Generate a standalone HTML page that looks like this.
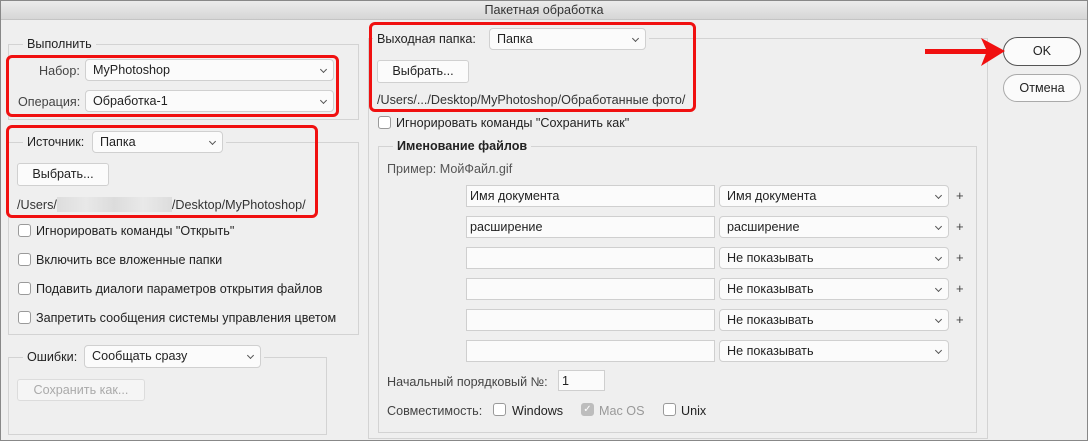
<!DOCTYPE html>
<html><head><meta charset="utf-8"><style>
*{box-sizing:border-box;margin:0;padding:0}
body{width:1088px;height:441px;overflow:hidden;background:#fff;font-family:"Liberation Sans",sans-serif;font-size:12.6px;color:#222}
#win{position:absolute;left:0;top:0;width:1088px;height:441px;border:1px solid #888;background:#efefef}
#tb{position:absolute;left:0;top:0;width:1086px;height:19px;background:linear-gradient(#ebebeb,#d6d6d6);border-bottom:1px solid #c4c4c4;text-align:center;font-size:12.6px;line-height:19px;color:#333}
.a{position:absolute}
.g{position:absolute;border:1px solid #d3d3d3}
.t{position:absolute;white-space:nowrap;line-height:16px}
.sel{position:absolute;background:#fbfbfb;border:1px solid #d0d0d0;border-radius:4px;padding-left:7px;line-height:20px;white-space:nowrap}
.sel:after{content:"";position:absolute;right:7px;top:7px;width:4px;height:4px;border-right:1px solid #555;border-bottom:1px solid #555;transform:rotate(45deg)}
.btn{position:absolute;background:#fbfbfb;border:1px solid #d0d0d0;border-radius:3px;text-align:center;line-height:20px}
.inp{position:absolute;background:#fbfbfb;border:1px solid #cfcfcf;padding-left:3px;line-height:20px}
.cb{position:absolute;width:13px;height:13px;border:1px solid #9a9a9a;border-radius:3px;background:#fff}
.red{position:absolute;border:3px solid #f01010;border-radius:6px}
.plus{position:absolute;font-size:13px;color:#444}
</style></head><body>
<div id="win">
<div id="tb">Пакетная обработка</div>

<div class="g" style="left:7px;top:43px;width:351px;height:76px"></div>
<div class="t" style="left:22px;top:35px;background:#efefef;padding:0 4px">Выполнить</div>
<div class="t" style="left:38px;top:62px;color:#444">Набор:</div>
<div class="sel" style="left:84px;top:58px;width:249px;height:22px">MyPhotoshop</div>
<div class="t" style="left:17px;top:93px;color:#444">Операция:</div>
<div class="sel" style="left:84px;top:89px;width:249px;height:22px">Обработка-1</div>
<div class="red" style="left:5px;top:54px;width:333px;height:62px"></div>

<div class="g" style="left:7px;top:141px;width:351px;height:193px"></div>
<div class="t" style="left:22px;top:133px;background:#efefef;padding:0 4px 0 4px;width:70px">Источник:</div>
<div class="sel" style="left:91px;top:130px;width:131px;height:22px;box-shadow:0 0 0 3px #efefef">Папка</div>
<div class="btn" style="left:16px;top:162px;width:92px;height:23px">Выбрать...</div>
<div class="t" style="left:16px;top:196px;color:#333">/Users/<span style="display:inline-block;width:115px;height:15px;vertical-align:-3px;background:linear-gradient(90deg,#ddd,#e8e8e8,#dcdcdc,#e9e9e9,#ddd)"></span>/Desktop/MyPhotoshop/</div>
<div class="red" style="left:5px;top:124px;width:312px;height:93px"></div>
<div class="cb" style="left:17px;top:223px"></div><div class="t" style="left:35px;top:222px">Игнорировать команды "Открыть"</div>
<div class="cb" style="left:17px;top:252px"></div><div class="t" style="left:35px;top:251px">Включить все вложенные папки</div>
<div class="cb" style="left:17px;top:281px"></div><div class="t" style="left:35px;top:280px">Подавить диалоги параметров открытия файлов</div>
<div class="cb" style="left:17px;top:310px"></div><div class="t" style="left:35px;top:309px">Запретить сообщения системы управления цветом</div>

<div class="g" style="left:7px;top:356px;width:319px;height:78px"></div>
<div class="t" style="left:22px;top:348px;background:#efefef;padding:0 4px;width:62px">Ошибки:</div>
<div class="sel" style="left:83px;top:344px;width:177px;height:23px;box-shadow:0 0 0 3px #efefef">Сообщать сразу</div>
<div class="btn" style="left:16px;top:378px;width:128px;height:22px;color:#aaa;background:#f5f5f5;border-color:#dcdcdc">Сохранить как...</div>

<div class="g" style="left:367px;top:37px;width:620px;height:401px"></div>
<div class="t" style="left:372px;top:30px;background:#efefef;padding:0 4px;width:118px">Выходная папка:</div>
<div class="sel" style="left:488px;top:27px;width:157px;height:22px;box-shadow:0 0 0 3px #efefef">Папка</div>
<div class="btn" style="left:376px;top:59px;width:92px;height:23px">Выбрать...</div>
<div class="t" style="left:376px;top:91px;color:#333">/Users/.../Desktop/MyPhotoshop/Обработанные фото/</div>
<div class="red" style="left:368px;top:21px;width:327px;height:90px"></div>
<div class="cb" style="left:377px;top:115px"></div><div class="t" style="left:395px;top:114px">Игнорировать команды "Сохранить как"</div>

<div class="g" style="left:377px;top:145px;width:599px;height:287px"></div>
<div class="t" style="left:392px;top:137px;background:#efefef;padding:0 4px;font-weight:bold">Именование файлов</div>
<div class="t" style="left:386px;top:160px;color:#555">Пример: МойФайл.gif</div>

<div class="inp" style="left:465px;top:184px;width:249px;height:22px">Имя документа</div>
<div class="sel" style="left:718px;top:184px;width:230px;height:22px">Имя документа</div><div class="plus" style="left:955px;top:187px">+</div>
<div class="inp" style="left:465px;top:215px;width:249px;height:22px">расширение</div>
<div class="sel" style="left:718px;top:215px;width:230px;height:22px">расширение</div><div class="plus" style="left:955px;top:218px">+</div>
<div class="inp" style="left:465px;top:246px;width:249px;height:22px"></div>
<div class="sel" style="left:718px;top:246px;width:230px;height:22px">Не показывать</div><div class="plus" style="left:955px;top:249px">+</div>
<div class="inp" style="left:465px;top:277px;width:249px;height:22px"></div>
<div class="sel" style="left:718px;top:277px;width:230px;height:22px">Не показывать</div><div class="plus" style="left:955px;top:280px">+</div>
<div class="inp" style="left:465px;top:308px;width:249px;height:22px"></div>
<div class="sel" style="left:718px;top:308px;width:230px;height:22px">Не показывать</div><div class="plus" style="left:955px;top:311px">+</div>
<div class="inp" style="left:465px;top:339px;width:249px;height:22px"></div>
<div class="sel" style="left:718px;top:339px;width:230px;height:22px">Не показывать</div>

<div class="t" style="left:386px;top:373px;color:#444">Начальный порядковый №:</div>
<div class="inp" style="left:557px;top:369px;width:47px;height:21px">1</div>
<div class="t" style="left:386px;top:402px;color:#444">Совместимость:</div>
<div class="cb" style="left:492px;top:402px"></div><div class="t" style="left:511px;top:402px">Windows</div>
<div class="cb" style="left:580px;top:402px;background:#bdbdbd;border-color:#bdbdbd;color:#fff;font-size:10px;line-height:11px;text-align:center">✓</div><div class="t" style="left:598px;top:402px;color:#999">Mac OS</div>
<div class="cb" style="left:662px;top:402px"></div><div class="t" style="left:680px;top:402px">Unix</div>

<div class="btn" style="left:1002px;top:36px;width:78px;height:29px;border-radius:15px;border:1px solid #555;line-height:27px">OK</div>
<div class="btn" style="left:1002px;top:73px;width:78px;height:28px;border-radius:14px;border:1px solid #aaa;line-height:26px">Отмена</div>
<svg class="a" style="left:920px;top:34px" width="90" height="34"><rect x="4" y="14" width="62" height="5" fill="#f01010"/><polygon points="60,3 84,16 60,31 66,16" fill="#f01010"/></svg>
</div>
</body></html>
